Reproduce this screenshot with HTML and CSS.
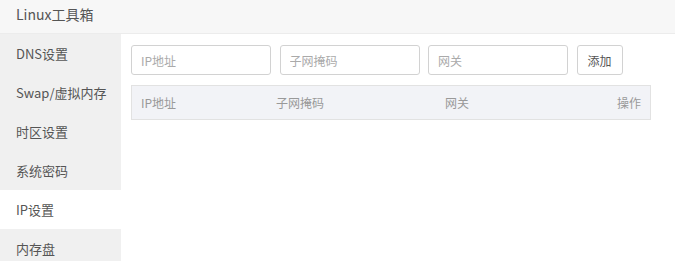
FILE: index.html
```html
<!DOCTYPE html>
<html lang="zh-CN">
<head>
  <meta charset="UTF-8">
  <title>Linux工具箱</title>
  <link rel="stylesheet" href="styles.css">
</head>
<body>
  <div class="header">Linux工具箱</div>
  <div class="main">
    <ul class="menu">
      <li>DNS设置</li>
      <li>Swap/虚拟内存</li>
      <li>时区设置</li>
      <li>系统密码</li>
      <li class="active">IP设置</li>
      <li>内存盘</li>
    </ul>
    <div class="content">
      <div class="form-row">
        <input type="text" class="field" placeholder="IP地址">
        <input type="text" class="field" placeholder="子网掩码">
        <input type="text" class="field" placeholder="网关">
        <button class="btn">添加</button>
      </div>
      <div class="table-head">
        <span>IP地址</span>
        <span>子网掩码</span>
        <span>网关</span>
        <span class="op">操作</span>
      </div>
    </div>
  </div>
</body>
</html>
```
FILE: styles.css
```css
body {
  margin: 0;
  font-family: "Noto Sans CJK SC", "Liberation Sans", sans-serif;
  background-color: #fff;
  color: #555;
  width: 675px;
  height: 261px;
  overflow: hidden;
}

.header {
  height: 33px;
  line-height: 29px;
  padding-left: 16px;
  font-size: 14px;
  color: #555;
  background-color: #f7f7f7;
  border-bottom: 1px solid #ececec;
}

.main {
  display: flex;
}

.menu {
  list-style: none;
  margin: 0;
  padding: 0;
  width: 121px;
  background-color: #f0f0f0;
}

.menu li {
  height: 39px;
  line-height: 39px;
  padding-left: 16px;
  font-size: 13px;
  color: #555;
}

.menu li.active {
  background-color: #fff;
}

.content {
  flex: 1;
  padding: 11px 10px 0 10px;
}

.form-row {
  display: flex;
  gap: 8.5px;
}

.field {
  width: 140px;
  height: 30px;
  box-sizing: border-box;
  border: 1px solid #d2d2d2;
  border-radius: 3px;
  padding: 0 9px;
  font-family: inherit;
  font-size: 12px;
  color: #555;
}

.field::placeholder {
  color: #aaa;
}

.btn {
  width: 46px;
  height: 30px;
  box-sizing: border-box;
  border: 1px solid #d2d2d2;
  border-radius: 3px;
  background-color: #fff;
  font-family: inherit;
  font-size: 12px;
  color: #555;
}

.table-head {
  display: grid;
  grid-template-columns: 135px 169px 1fr auto;
  margin-top: 10px;
  width: 520px;
  height: 35px;
  box-sizing: border-box;
  align-items: center;
  padding: 0 9px 0 9px;
  background-color: #f2f3f7;
  border: 1px solid #e2e2e2;
  font-size: 12px;
  color: #999;
}
```
